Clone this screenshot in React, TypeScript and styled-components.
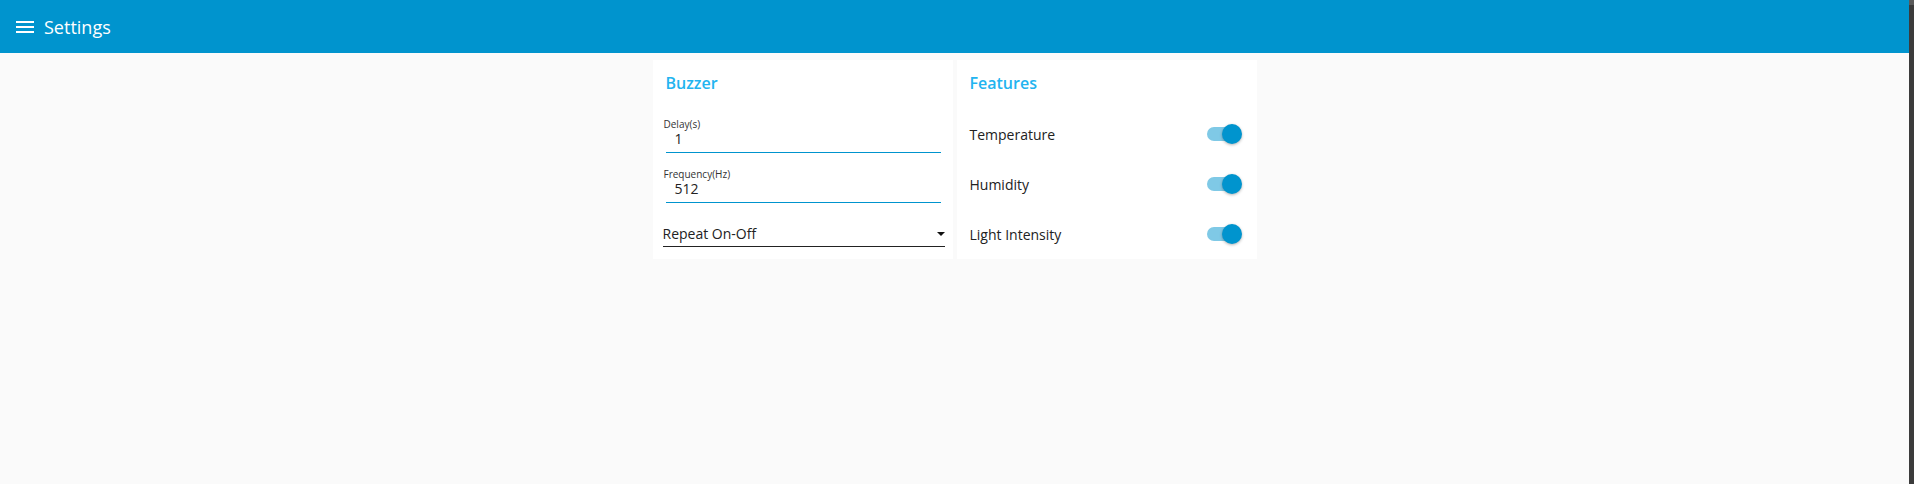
import React from "react";
import styled, { createGlobalStyle } from "styled-components";

const Global = createGlobalStyle`
  html, body { margin: 0; padding: 0; height: 100%; }
  body { background: #fafafa; font-family: "Open Sans", "Noto Sans", sans-serif; color: #222; overflow: hidden; }
  #root { height: 100%; }
`;

const Shell = styled.div`
  display: flex;
  height: 484px;
`;

const Page = styled.div`
  flex: 1;
  display: flex;
  flex-direction: column;
  background: #fafafa;
`;

const ScrollStrip = styled.div`
  width: 5px;
  background: linear-gradient(#5a5a5a 0 5px, #3b3b3b 5px);
`;

const Header = styled.header`
  height: 53px;
  background: #0094ce;
  display: flex;
  align-items: center;
  padding-left: 13px;
  color: #fff;
`;

const Title = styled.h1`
  margin: 0 0 0 7px;
  font-size: 18px;
  font-weight: 400;
  letter-spacing: 0;
`;

const Main = styled.main`
  display: flex;
  justify-content: center;
  gap: 4px;
  padding-top: 7px;
`;

const Card = styled.section<{ $pad: string }>`
  width: 300px;
  height: 199px;
  box-sizing: border-box;
  background: #fff;
  padding: ${(p) => p.$pad};
  display: flex;
  flex-direction: column;
`;

const CardTitle = styled.h2`
  margin: 0;
  font-size: 16px;
  line-height: 20px;
  font-weight: 600;
  color: #22b4f0;
`;

const Field = styled.div<{ $mt: number }>`
  display: flex;
  flex-direction: column;
  margin: ${(p) => p.$mt}px 0 0 0;
`;

const FieldLabel = styled.label`
  font-size: 10px;
  line-height: 11px;
  color: #333;
  margin-left: -2px;
`;

const FieldValue = styled.div`
  font-size: 14px;
  line-height: 18px;
  padding: 0 0 4px 9px;
  color: #222;
  border-bottom: 1.5px solid #0094ce;
`;

const Select = styled.div`
  margin: 22px -4px 0 -3px;
  display: flex;
  align-items: center;
  justify-content: space-between;
  font-size: 14px;
  line-height: 18px;
  padding-bottom: 3px;
  border-bottom: 1.5px solid #222;
`;

const Caret = styled.span`
  width: 0;
  height: 0;
  border-left: 4px solid transparent;
  border-right: 4px solid transparent;
  border-top: 4px solid #111;
`;

const Rows = styled.div`
  margin-top: 16px;
  display: flex;
  flex-direction: column;
`;

const Row = styled.div`
  display: flex;
  align-items: center;
  justify-content: space-between;
  height: 50px;
  font-size: 14px;
  color: #222;
`;

const Switch = styled.span`
  width: 34px;
  height: 14px;
  border-radius: 7px;
  background: #7fc9e6;
  display: flex;
  align-items: center;
  justify-content: flex-end;
`;

const Thumb = styled.span`
  width: 20px;
  height: 20px;
  border-radius: 50%;
  background: #0094ce;
  box-shadow: 0 1px 3px rgba(0, 0, 0, 0.3);
  margin-right: -1px;
`;

const MenuIcon = () => (
  <svg width="24" height="24" viewBox="0 0 24 24" fill="#fff">
    <path d="M3 18h18v-2H3v2zm0-5h18v-2H3v2zm0-7v2h18V6H3z" />
  </svg>
);

export default function App() {
  return (
    <>
      <Global />
      <Shell>
        <Page>
          <Header>
            <MenuIcon />
            <Title>Settings</Title>
          </Header>
          <Main>
            <Card $pad="13px 12px 0 13px">
              <CardTitle>Buzzer</CardTitle>
              <Field $mt={26}>
                <FieldLabel>Delay(s)</FieldLabel>
                <FieldValue>1</FieldValue>
              </Field>
              <Field $mt={16}>
                <FieldLabel>Frequency(Hz)</FieldLabel>
                <FieldValue>512</FieldValue>
              </Field>
              <Select>
                <span>Repeat On-Off</span>
                <Caret />
              </Select>
            </Card>
            <Card $pad="13px 16px 0 13px">
              <CardTitle>Features</CardTitle>
              <Rows>
                <Row>
                  <span>Temperature</span>
                  <Switch><Thumb /></Switch>
                </Row>
                <Row>
                  <span>Humidity</span>
                  <Switch><Thumb /></Switch>
                </Row>
                <Row>
                  <span>Light Intensity</span>
                  <Switch><Thumb /></Switch>
                </Row>
              </Rows>
            </Card>
          </Main>
        </Page>
        <ScrollStrip />
      </Shell>
    </>
  );
}
